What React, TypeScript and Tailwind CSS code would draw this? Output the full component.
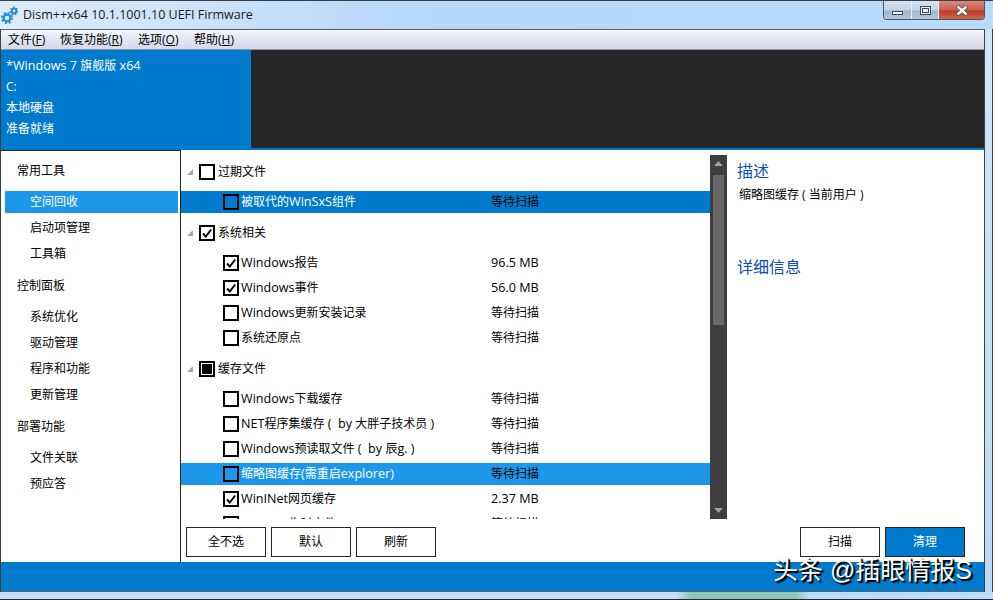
const font = 'font-["Open_Sans","Noto_Sans_CJK_SC",sans-serif]'

type Check = 'none' | 'checked' | 'mixed'

interface Item {
  label: string
  size: string
  check: Check
  selected?: 'dark' | 'light'
}

interface Group {
  label: string
  check: Check
  items: Item[]
}

const groups: Group[] = [
  {
    label: '过期文件',
    check: 'none',
    items: [{ label: '被取代的WinSxS组件', size: '等待扫描', check: 'none', selected: 'dark' }],
  },
  {
    label: '系统相关',
    check: 'checked',
    items: [
      { label: 'Windows报告', size: '96.5 MB', check: 'checked' },
      { label: 'Windows事件', size: '56.0 MB', check: 'checked' },
      { label: 'Windows更新安装记录', size: '等待扫描', check: 'none' },
      { label: '系统还原点', size: '等待扫描', check: 'none' },
    ],
  },
  {
    label: '缓存文件',
    check: 'mixed',
    items: [
      { label: 'Windows下载缓存', size: '等待扫描', check: 'none' },
      { label: 'NET程序集缓存 (  by 大胖子技术员 )', size: '等待扫描', check: 'none' },
      { label: 'Windows预读取文件 (  by 辰g. )', size: '等待扫描', check: 'none' },
      { label: '缩略图缓存(需重启explorer)', size: '等待扫描', check: 'none', selected: 'light' },
      { label: 'WinINet网页缓存', size: '2.37 MB', check: 'checked' },
      { label: 'Internet临时文件', size: '等待扫描', check: 'none' },
    ],
  },
]

const nav = [
  { title: '常用工具', items: ['空间回收', '启动项管理', '工具箱'] },
  { title: '控制面板', items: ['系统优化', '驱动管理', '程序和功能', '更新管理'] },
  { title: '部署功能', items: ['文件关联', '预应答'] },
]

// latin runs sit a little larger than the CJK ones, as in the original font
function Mixed({ text }: { text: string }) {
  const parts = text.match(/[\x00-\x7f]+|[^\x00-\x7f]+/g) || []
  return (
    <>
      {parts.map((part, i) =>
        part.charCodeAt(0) < 128 ? (
          <span key={i} className="text-[12.6px] whitespace-pre">
            {part}
          </span>
        ) : (
          <span key={i}>{part}</span>
        ),
      )}
    </>
  )
}

function CheckBox({ check }: { check: Check }) {
  return (
    <span className="w-[16px] h-[16px] shrink-0 border-2 border-black flex items-center justify-center">
      {check === 'checked' && (
        <svg width="12" height="12" viewBox="0 0 12 12" fill="none">
          <path d="M2 6.5 L4.8 9.5 L10.2 2.5" stroke="#000" strokeWidth="2" />
        </svg>
      )}
      {check === 'mixed' && <span className="w-[10px] h-[10px] bg-black" />}
    </span>
  )
}

function Caret() {
  return (
    <svg width="8" height="8" viewBox="0 0 8 8" className="shrink-0">
      <path d="M7 1 V7 H1 Z" fill="#a6a6a6" />
    </svg>
  )
}

function Gears() {
  return (
    <svg width="17" height="18" viewBox="0 0 17 18" className="shrink-0">
      <circle cx="6" cy="12" r="3.4" fill="none" stroke="#1c8fe0" strokeWidth="2.2" />
      <circle cx="6" cy="12" r="5.2" fill="none" stroke="#1c8fe0" strokeWidth="1.8" strokeDasharray="2 2.1" />
      <circle cx="13" cy="5" r="2.3" fill="none" stroke="#2a7fd0" strokeWidth="1.8" />
      <circle cx="13" cy="5" r="3.7" fill="none" stroke="#2a7fd0" strokeWidth="1.4" strokeDasharray="1.6 1.6" />
    </svg>
  )
}

function Menu({ label, hotkey, className }: { label: string; hotkey: string; className: string }) {
  return (
    <span className={className}>
      {label}(<span className="underline">{hotkey}</span>)
    </span>
  )
}

function Button({ label, primary }: { label: string; primary?: boolean }) {
  return (
    <button
      className={`w-[80px] h-[30px] border border-[#262626] text-[12px] ${
        primary ? 'bg-[#007acc] text-white' : 'bg-white text-black'
      }`}
    >
      {label}
    </button>
  )
}

export default function App() {
  return (
    <div
      className={`${font} relative w-[993px] h-[600px] overflow-hidden flex flex-col bg-[#bcdbf8] text-[12px] text-black`}
    >
      {/* Title bar */}
      <div className="h-[29px] shrink-0 flex items-start bg-[linear-gradient(90deg,#dcecfb_0%,#b5d7f8_45%,#b9daf9_100%)] border-t border-[#3a3f46]">
        <div className="flex items-center pl-[1px] pt-[5px] gap-[5px]">
          <Gears />
          <span className="text-[12.5px] text-[#1a1a1a] leading-[18px]">Dism++x64 10.1.1001.10 UEFI Firmware</span>
        </div>
        <div className="ml-auto mr-[8px] flex h-[19px] w-[102px] rounded-b-[4px] overflow-hidden border border-t-0 border-[#4d5560]">
          <div className="w-[28px] flex items-end justify-center pb-[4px] border-r border-[#e8eef5] bg-[linear-gradient(180deg,#d5e2f0_0%,#c3d5e7_50%,#9fb6cd_55%,#b4c8dc_100%)]">
            <span className="w-[11px] h-[4px] bg-white border border-[#3f4b5a]" />
          </div>
          <div className="w-[27px] flex items-center justify-center border-r border-[#e8eef5] bg-[linear-gradient(180deg,#d5e2f0_0%,#c3d5e7_50%,#9fb6cd_55%,#b4c8dc_100%)]">
            <span className="w-[11px] h-[9px] border border-[#3f4b5a] bg-[#e4ecf4] flex items-center justify-center">
              <span className="w-[7px] h-[5px] border border-[#3f4b5a]" />
            </span>
          </div>
          <div className="flex-1 flex items-center justify-center bg-[linear-gradient(180deg,#d98a7c_0%,#c9614f_48%,#b93a25_55%,#d06a50_100%)]">
            <svg width="14" height="11" viewBox="0 0 14 11">
              <path d="M2 1 L12 10 M12 1 L2 10" stroke="#3f4b5a" strokeWidth="4" />
              <path d="M2.5 1.5 L11.5 9.5 M11.5 1.5 L2.5 9.5" stroke="#fff" strokeWidth="2.4" />
            </svg>
          </div>
        </div>
      </div>

      {/* Window content */}
      <div className="flex-1 min-h-0 flex">
        <div className="w-[1px] shrink-0 bg-[#3a3f46]" />
        <div className="w-[984px] flex flex-col border-r border-[#3a3f46]">
          {/* Menu bar */}
          <div className="h-[21px] shrink-0 flex items-center border-t border-b border-t-[#5a6068] border-b-[#8a92a8] bg-[linear-gradient(180deg,#f6f7fc_0%,#e6e9f4_40%,#d5daeb_100%)] leading-none">
            <Menu label="文件" hotkey="F" className="ml-[7px] w-[52px]" />
            <Menu label="恢复功能" hotkey="R" className="w-[78px]" />
            <Menu label="选项" hotkey="O" className="w-[56px]" />
            <Menu label="帮助" hotkey="H" className="" />
          </div>

          {/* Status header */}
          <div className="h-[100px] shrink-0 flex bg-[#007acc]">
            <div className="w-[250px] shrink-0 pl-[5px] pt-[5px] text-white flex flex-col">
              <div className="h-[21px] leading-[21px]">
                <Mixed text="*Windows 7 旗舰版 x64" />
              </div>
              <div className="h-[21px] leading-[21px]">C:</div>
              <div className="h-[21px] leading-[21px]">本地硬盘</div>
              <div className="h-[21px] leading-[21px]">准备就绪</div>
            </div>
            <div className="flex-1 h-[98px] bg-[#262626]" />
          </div>

          {/* Main area */}
          <div className="h-[412px] shrink-0 flex bg-white">
            {/* Sidebar */}
            <div className="w-[180px] shrink-0 border-r border-t border-[#262626] pl-[4px] pr-[2px]">
              {nav.map((section, i) => (
                <div key={section.title} className={i === 0 ? 'pt-[9px]' : 'pt-[10px]'}>
                  <div className="h-[22px] leading-[22px] pl-[12px] mb-[9px]">{section.title}</div>
                  <div className="flex flex-col gap-[4px]">
                    {section.items.map((item) => (
                      <div
                        key={item}
                        className={`h-[22px] leading-[22px] pl-[25px] ${
                          item === '空间回收' ? 'bg-[#1c97ea] text-white' : ''
                        }`}
                      >
                        {item}
                      </div>
                    ))}
                  </div>
                </div>
              ))}
            </div>

            {/* Cleanup list and actions */}
            <div className="flex-1 min-w-0 flex flex-col">
              <div className="h-[377px] shrink-0 flex">
                <div className="w-[529px] shrink-0 h-[369px] overflow-hidden">
                  {groups.map((group, i) => (
                    <div key={group.label} className={i === 0 ? 'pt-[10px]' : 'pt-[8px]'}>
                      <div className="h-[24px] flex items-center pl-[5px]">
                        <Caret />
                        <span className="w-[5px]" />
                        <CheckBox check={group.check} />
                        <span className="ml-[3px]">{group.label}</span>
                      </div>
                      <div className="flex flex-col gap-[3px] pt-[7px]">
                        {group.items.map((item) => (
                          <div
                            key={item.label}
                            className={`h-[22px] shrink-0 flex items-center pl-[42px] ${
                              item.selected === 'dark'
                                ? 'bg-[#007acc] text-white'
                                : item.selected === 'light'
                                  ? 'bg-[#1c97ea] text-white'
                                  : ''
                            }`}
                          >
                            <CheckBox check={item.check} />
                            <span className="ml-[2px] w-[250px] whitespace-nowrap">
                              <Mixed text={item.label} />
                            </span>
                            <span className="text-black">
                              <Mixed text={item.size} />
                            </span>
                          </div>
                        ))}
                      </div>
                    </div>
                  ))}
                </div>

                {/* Scrollbar */}
                <div className="w-[17px] shrink-0 h-[364px] mt-[5px] bg-[#3e3e42] flex flex-col items-center">
                  <svg width="9" height="5" viewBox="0 0 9 5" className="mt-[6px]">
                    <path d="M4.5 0 L9 5 H0 Z" fill="#a0a0a0" />
                  </svg>
                  <div className="w-[11px] h-[150px] mt-[9px] bg-[#686868]" />
                  <svg width="9" height="5" viewBox="0 0 9 5" className="mt-auto mb-[6px]">
                    <path d="M0 0 H9 L4.5 5 Z" fill="#a0a0a0" />
                  </svg>
                </div>

                {/* Description */}
                <div className="flex-1 pl-[10px] pt-[10px]">
                  <div className="text-[16px] leading-[22px] text-[#0a4fb0]">描述</div>
                  <div className="pl-[2px] leading-[22px] h-[22px] mt-[2px] whitespace-pre">缩略图缓存 ( 当前用户 )</div>
                  <div className="text-[16px] leading-[22px] text-[#0a4fb0] mt-[50px]">详细信息</div>
                </div>
              </div>

              <div className="flex pl-[5px] pr-[19px]">
                <div className="flex gap-[5px]">
                  <Button label="全不选" />
                  <Button label="默认" />
                  <Button label="刷新" />
                </div>
                <div className="flex gap-[5px] ml-auto">
                  <Button label="扫描" />
                  <Button label="清理" primary />
                </div>
              </div>
            </div>
          </div>

          {/* Status bar */}
          <div className="h-[30px] shrink-0 bg-[#007acc] border-b border-[#5a6068]" />
        </div>
        <div className="flex-1 bg-[linear-gradient(180deg,#d0e5fa_0%,#bcdbf8_100%)] border-r border-[#3a3f46]" />
      </div>

      {/* Bottom glass frame */}
      <div className="h-[8px] shrink-0 flex border-b border-[#26292e] bg-[linear-gradient(90deg,#c6dff8_0%,#c6dff8_68%,#8fc4b6_69.5%,#8fc4b6_80%,#bcdbf8_81.5%,#bcdbf8_100%)]" />

      {/* Watermark */}
      <div className="absolute left-[773px] top-[555px] text-[25px] leading-[30px] text-white whitespace-nowrap font-['Liberation_Sans','Noto_Sans_CJK_SC',sans-serif] [text-shadow:1px_1px_1px_#000,2px_2px_1px_#000]">
        头条 @插眼情报S
      </div>
    </div>
  )
}
